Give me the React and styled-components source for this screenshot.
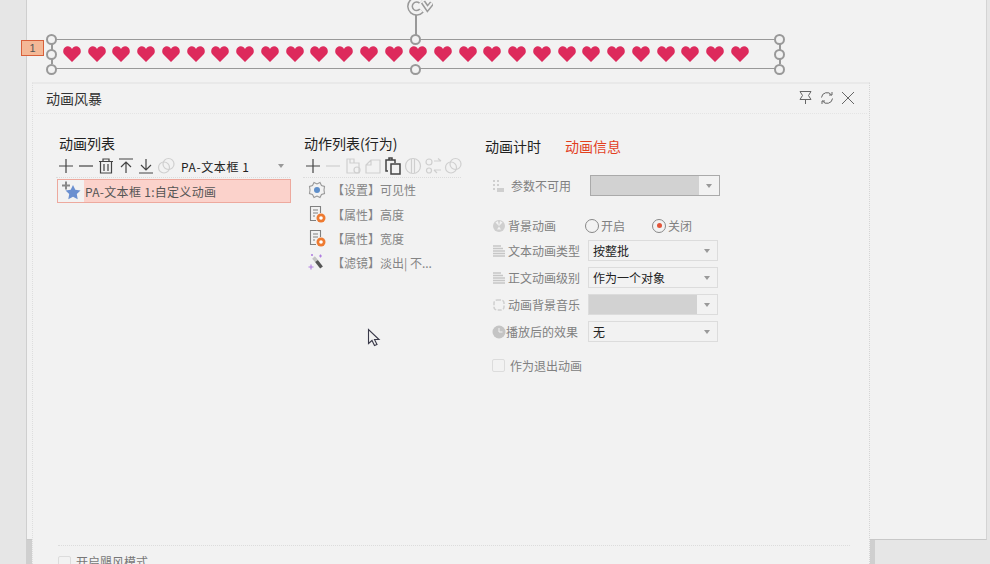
import React from "react";
import styled, { createGlobalStyle } from "styled-components";

const FONT = `"Noto Sans CJK SC", "Liberation Sans", sans-serif`;

const GlobalStyle = createGlobalStyle`
  html, body {
    margin: 0;
    padding: 0;
    width: 990px;
    height: 564px;
    overflow: hidden;
    background: #e6e6e6;
    font-family: ${FONT};
  }
`;

const Stage = styled.div`
  position: relative;
  width: 990px;
  height: 564px;
  overflow: hidden;
  background: #e6e6e6;
`;

const Slide = styled.div`
  position: absolute;
  left: 26px;
  top: 0;
  width: 961px;
  height: 540px;
  background: #f2f2f2;
  border-left: 1px solid #cfcfcf;
  border-right: 1px solid #d4d4d4;
  border-bottom: 1px solid #c8c8c8;
  box-sizing: border-box;
`;

const ShadowStrip = styled.div`
  position: absolute;
  top: 540px;
  left: ${(p) => p.$x}px;
  width: ${(p) => p.$w}px;
  height: 24px;
  background: #cfcfcf;
`;

const SelectBox = styled.div`
  position: absolute;
  left: 51px;
  top: 39px;
  width: 728px;
  height: 30px;
  box-sizing: border-box;
  border-top: 1px solid #999;
  border-bottom: 1px solid #999;
  display: flex;
  align-items: center;
  justify-content: space-between;
  padding: 0 30px 0 12px;
`;

const Heart = styled.svg`
  width: 18px;
  height: 16px;
  flex: none;
  fill: #dd2a5c;
`;

const Handle = styled.span`
  position: absolute;
  width: 11px;
  height: 11px;
  box-sizing: border-box;
  border: 2px solid #999;
  border-radius: 50%;
  background: #f2f2f2;
  left: ${(p) => p.$x}px;
  top: ${(p) => p.$y}px;
`;

const HandleBar = styled.span`
  position: absolute;
  width: 2px;
  background: #999;
  left: ${(p) => p.$x}px;
  top: ${(p) => p.$y}px;
  height: ${(p) => p.$h}px;
`;

const SlideTag = styled.div`
  position: absolute;
  left: 21px;
  top: 40px;
  width: 23px;
  height: 16px;
  box-sizing: border-box;
  background: #f4b896;
  border: 1px solid #d8603a;
  color: #555;
  font: 11px/14px "Liberation Sans", sans-serif;
  text-align: center;
`;

const RotateIcon = styled.svg`
  position: absolute;
  left: 405px;
  top: -5px;
  width: 28px;
  height: 22px;
  fill: none;
`;

const Dialog = styled.section`
  position: absolute;
  left: 32px;
  top: 82px;
  width: 838px;
  height: 520px;
  box-sizing: border-box;
  background: #f2f2f2;
  border-top: 2px solid #e9e9e9;
  border-left: 1px dotted #dedede;
  border-right: 1px dotted #d4d4d4;
  color: #222;
  font-size: 12px;
`;

const TitleBar = styled.header`
  height: 27px;
  margin: 0 2px 0 1px;
  padding: 0 12px 2px;
  border-bottom: 1px dotted #e4e4e4;
  display: flex;
  align-items: center;
  justify-content: space-between;
  font-size: 14px;
  color: #333;
`;

const TitleIcons = styled.div`
  display: flex;
  gap: 7px;
  align-items: center;
  color: #666;
`;

const Body = styled.div`
  display: flex;
  height: 431px;
  padding: 20px 0 0 26px;
  box-sizing: border-box;
`;

const ListColumn = styled.div`
  width: 245px;
  flex: none;
`;

const ActionColumn = styled.div`
  width: 181px;
  flex: none;
`;

const InfoColumn = styled.div`
  flex: 1;
`;

const ColumnTitle = styled.h3`
  margin: 0;
  font-size: 14px;
  font-weight: 400;
  line-height: 18px;
  color: #222;
`;

const Toolbar = styled.div`
  display: flex;
  align-items: center;
  width: ${(p) => p.$w}px;
  height: 22px;
  margin: 3px 0 0 ${(p) => p.$ml}px;
  border-bottom: 1px dotted #dcdcdc;
`;

const ToolIcon = styled.svg`
  width: 20px;
  height: 20px;
  flex: none;
  fill: none;
  stroke: ${(p) => (p.$off ? "#cfcfcf" : "#444")};
  stroke-width: 1.2;
`;

const ToolSelect = styled.div`
  flex: 1;
  margin-left: 5px;
  display: flex;
  align-items: center;
  justify-content: space-between;
  padding-right: 6px;
  font-size: 12px;
  letter-spacing: 0.6px;
  color: #222;
`;

const Caret = styled.span`
  width: 0;
  height: 0;
  border-left: 3px solid transparent;
  border-right: 3px solid transparent;
  border-top: 4px solid ${(p) => p.$c || "#999"};
`;

const AnimRow = styled.div`
  width: 234px;
  height: 24px;
  margin: 1px 0 0 -2px;
  box-sizing: border-box;
  display: flex;
  align-items: center;
  background: #fbd2cb;
  border: 1px solid #eda99e;
  font-size: 12px;
  letter-spacing: 0.3px;
  color: #555;
`;

const StarCell = styled.span`
  width: 26px;
  height: 22px;
  margin-right: 1px;
  flex: none;
  background: #f2f2f2;
  display: flex;
  align-items: center;
  justify-content: center;
`;

const ActionItem = styled.div`
  display: flex;
  align-items: center;
  height: 24px;
  padding-left: 4px;
  font-size: 12px;
  color: #858585;
  &:first-child {
    height: 25px;
  }
  svg {
    width: 18px;
    height: 18px;
    flex: none;
    margin-right: 6px;
  }
`;

const ActionList = styled.div`
  margin-top: -1px;
`;

const Tabs = styled.div`
  display: flex;
  gap: 24px;
  height: 21px;
  align-items: center;
  margin-top: 1px;
  font-size: 14px;
`;

const Tab = styled.span`
  color: ${(p) => (p.$active ? "#e2401f" : "#222")};
`;

const ParamRow = styled.div`
  display: flex;
  align-items: center;
  height: 21px;
  margin-top: ${(p) => p.$gap || 6}px;
  color: #808080;
  font-size: 12px;
`;

const RowIcon = styled.span`
  width: 14px;
  height: 14px;
  flex: none;
  margin: 0 ${(p) => p.$mr}px 0 7px;
  display: flex;
  align-items: center;
  justify-content: center;
  svg {
    width: 14px;
    height: 14px;
  }
`;

const RowLabel = styled.span`
  width: ${(p) => p.$w}px;
  flex: none;
`;

const Dropdown = styled.div`
  width: 130px;
  height: 21px;
  box-sizing: border-box;
  display: flex;
  align-items: center;
  background: #f2f2f2;
  border: 1px solid ${(p) => (p.$strong ? "#aaa" : "#dcdcdc")};
  color: #222;
`;

const DropValue = styled.span`
  flex: 1;
  align-self: stretch;
  display: flex;
  align-items: center;
  padding-left: 4px;
  background: ${(p) => (p.$dim ? "#d2d2d2" : "transparent")};
`;

const DropCaret = styled.span`
  width: 20px;
  flex: none;
  display: flex;
  justify-content: center;
`;

const RadioLabel = styled.label`
  display: flex;
  align-items: center;
  gap: 2px;
  width: 67px;
  color: #808080;
`;

const Radio = styled.span`
  width: 14px;
  height: 14px;
  box-sizing: border-box;
  border: 1px solid #888;
  border-radius: 50%;
  display: flex;
  align-items: center;
  justify-content: center;
  &::after {
    content: "";
    width: 5px;
    height: 5px;
    border-radius: 50%;
    background: ${(p) => (p.$on ? "#e2553a" : "transparent")};
  }
`;

const Check = styled.span`
  width: 13px;
  height: 13px;
  flex: none;
  box-sizing: border-box;
  border: 1px solid #dcdcdc;
  border-radius: 2px;
  margin: ${(p) => p.$m};
`;

const Footer = styled.footer`
  margin: 0 19px 0 25px;
  padding-top: 8px;
  border-top: 1px dotted #dcdcdc;
  display: flex;
  align-items: center;
  color: #777;
  font-size: 12px;
  line-height: 16px;
`;

const Cursor = styled.svg`
  position: absolute;
  left: 367px;
  top: 328px;
  width: 15px;
  height: 20px;
`;

const Plus = ({ off }) => (
  <ToolIcon $off={off} viewBox="0 0 20 20"><path d="M3 10h14M10 3v14" /></ToolIcon>
);
const Minus = ({ off }) => (
  <ToolIcon $off={off} viewBox="0 0 20 20"><path d="M3 10h14" /></ToolIcon>
);
const Trash = () => (
  <ToolIcon viewBox="0 0 20 20">
    <path d="M3 5.500h14M7 5.500V3h6v2.500M4.500 5.500v11.500h11V5.500M8 8v7M12 8v7" />
  </ToolIcon>
);
const ToTop = () => (
  <ToolIcon viewBox="0 0 20 20"><path d="M3 3h14M10 17V6M5 11l5-5 5 5" /></ToolIcon>
);
const ToBottom = () => (
  <ToolIcon viewBox="0 0 20 20"><path d="M3 17h14M10 3v11M5 9l5 5 5-5" /></ToolIcon>
);
const Rings = () => (
  <ToolIcon $off viewBox="0 0 20 20">
    <circle cx="8" cy="11.500" r="5.500" /><circle cx="12.500" cy="8" r="5.500" />
  </ToolIcon>
);
const CopyShape = () => (
  <ToolIcon $off viewBox="0 0 20 20">
    <path d="M4 3h7v4h5v10H4zM7 3v4h4" /><circle cx="14" cy="14" r="3" />
  </ToolIcon>
);
const Duplicate = () => (
  <ToolIcon $off viewBox="0 0 20 20"><path d="M3 9l5-5h9v13H3zM8 4v5H3" /></ToolIcon>
);
const Paste = () => (
  <ToolIcon viewBox="0 0 20 20" style={{ strokeWidth: 1.5 }}>
    <path d="M5 15H3V4h9v3M6 4V2h3v2M8 8h9v10H8z" />
  </ToolIcon>
);
const Split = () => (
  <ToolIcon $off viewBox="0 0 20 20">
    <circle cx="10" cy="10" r="7.500" /><path d="M8.500 3v14M11.500 3v14" />
  </ToolIcon>
);
const Swap = () => (
  <ToolIcon $off viewBox="0 0 20 20">
    <circle cx="6" cy="6" r="3" /><circle cx="6" cy="14.500" r="2.500" />
    <path d="M11 5h7M15 2.500l3 2.500M18 14h-7M14 17l-3-3" />
  </ToolIcon>
);

const Gear = () => (
  <svg viewBox="0 0 18 18">
    <path d="M6 1.500l3 1.500 3-1.500 1.500 3 3 1-.5 3.500.5 3.500-3 1-1.500 3-3-1.500-3 1.500-1.500-3-3-1 .5-3.500-.5-3.500 3-1z" fill="none" stroke="#999" strokeWidth="1.100" />
    <circle cx="9" cy="9" r="3" fill="#5f8fca" />
  </svg>
);
const DocStar = () => (
  <svg viewBox="0 0 18 18">
    <path d="M12.500 8V1.500h-10v14H8M5 5h5M5 8h5M5 11h2" fill="none" stroke="#808080" strokeWidth="1.100" />
    <circle cx="13" cy="13" r="4.500" fill="#ee7a30" />
    <circle cx="13" cy="13" r="1.800" fill="#fff" />
  </svg>
);
const Wand = () => (
  <svg viewBox="0 0 18 18" fill="none">
    <path d="M5.500 4.500L8.500 8" stroke="#c4c4c4" strokeWidth="3.500" />
    <path d="M8.500 8L13.500 14.500" stroke="#555" strokeWidth="3.500" />
    <path d="M3 11.500v5M.5 14h5M12.500 1.500v3M11 3h3M4 1v2M3 2h2" stroke="#b07ee0" strokeWidth="1.100" />
  </svg>
);

const GridMark = () => (
  <svg viewBox="0 0 14 14" fill="#cfcfcf">
    <path d="M1 1h2v2H1zM5 1h2v2H5zM1 5h2v2H1zM5 5h2v2H5zM1 9h2v2H1zM5 9h7v4H5z" />
  </svg>
);
const Nuke = () => (
  <svg viewBox="0 0 14 14">
    <circle cx="7" cy="7" r="6" fill="#cfcfcf" />
    <path d="M7 7L3.500 3.500 6 2zM7 7l3.500-3.500L8 2zM5 10.500l2-3 2 3z" fill="#f2f2f2" />
  </svg>
);
const Lines = () => (
  <svg viewBox="0 0 14 14" stroke="#c6c6c6" strokeWidth="1.400">
    <path d="M1 2h8M1 4.500h10M1 7h12M1 9.500h12M1 12h12" />
  </svg>
);
const DashRing = () => (
  <svg viewBox="0 0 14 14" fill="none" stroke="#cfcfcf" strokeWidth="1.500">
    <rect x="2" y="2" width="10" height="10" rx="3" strokeDasharray="4 1.500" />
  </svg>
);
const Clock = () => (
  <svg viewBox="0 0 14 14">
    <circle cx="7" cy="7" r="6.500" fill="#c4c4c4" />
    <path d="M7 3v4h3.500" fill="none" stroke="#f2f2f2" strokeWidth="1" />
  </svg>
);

const actions = [
  { icon: <Gear />, text: "【设置】可见性" },
  { icon: <DocStar />, text: "【属性】高度" },
  { icon: <DocStar />, text: "【属性】宽度" },
  { icon: <Wand />, text: "【滤镜】淡出| 不..." },
];

const handles = [
  [46, 34], [410, 34], [774, 34],
  [46, 49], [774, 49],
  [46, 64], [410, 64], [774, 64],
];

const ROTATE_ARC = "M16 6.500A6.500 6.500 0 1 0 16.500 15.500";
const ROTATE_TIP = "M18 7l4.500 6.500L27 8";

const App = () => (
  <Stage>
    <GlobalStyle />
    <Slide />
    <ShadowStrip $x={26} $w={6} />
    <ShadowStrip $x={870} $w={5} />
    <SelectBox>
      {Array.from({ length: 28 }).map((_, i) => (
        <Heart key={i} viewBox="0 0 18 16">
          <path d="M9 16L1.500 8.500C-.500 6.500 0 3 1.800 1.500 4 -.500 7.500 0 9 3c1.500-3 5-3.500 7.200-1.500C18 3 18.500 6.500 16.500 8.500z" />
        </Heart>
      ))}
    </SelectBox>
    <HandleBar $x={415} $y={15} $h={21} />
    <HandleBar $x={779} $y={44} $h={20} />
    <HandleBar $x={51} $y={44} $h={20} />
    {handles.map(([x, y]) => (
      <Handle key={`${x}-${y}`} $x={x} $y={y} />
    ))}
    <RotateIcon viewBox="0 0 28 22">
      <path d={ROTATE_ARC} stroke="#999" strokeWidth="6" />
      <path d={ROTATE_ARC} stroke="#f2f2f2" strokeWidth="3" />
      <path d={ROTATE_TIP} stroke="#999" strokeWidth="5" />
      <path d={ROTATE_TIP} stroke="#f2f2f2" strokeWidth="2" />
    </RotateIcon>
    <SlideTag>1</SlideTag>

    <Dialog>
      <TitleBar>
        <span>动画风暴</span>
        <TitleIcons>
          <svg width="15" height="15" viewBox="0 0 15 15" fill="none" stroke="currentColor">
            <path d="M2 1.500h11l-2.500 4 2.500 4H2l2.500-4zM7.500 9.500V14" />
          </svg>
          <svg width="14" height="14" viewBox="0 0 14 14" fill="none" stroke="currentColor">
            <path d="M1.500 6.500A5.500 5.500 0 0 1 11.500 4M12.500 7.500A5.500 5.500 0 0 1 2.500 10M9 4h3V1M5 10H2v3" />
          </svg>
          <svg width="14" height="14" viewBox="0 0 14 14" fill="none" stroke="currentColor">
            <path d="M1 1l12 12M13 1L1 13" />
          </svg>
        </TitleIcons>
      </TitleBar>
      <Body>
        <ListColumn>
          <ColumnTitle>动画列表</ColumnTitle>
          <Toolbar $w={234} $ml={-3}>
            <Plus />
            <Minus />
            <Trash />
            <ToTop />
            <ToBottom />
            <Rings />
            <ToolSelect>
              <span>PA-文本框 1</span>
              <Caret />
            </ToolSelect>
          </Toolbar>
          <AnimRow>
            <StarCell>
              <svg width="22" height="20" viewBox="0 0 22 20">
                <path d="M13 4l2.300 4.700 5.200.8-3.700 3.600.9 5.100-4.700-2.400-4.700 2.400.9-5.100L5.500 9.500l5.200-.8z" fill="#6a8fd0" />
                <path d="M2 4.500h8M6 .5v8" stroke="#888" strokeWidth="2" />
              </svg>
            </StarCell>
            PA-文本框 1:自定义动画
          </AnimRow>
        </ListColumn>

        <ActionColumn>
          <ColumnTitle>动作列表(行为)</ColumnTitle>
          <Toolbar $w={158} $ml={-1}>
            <Plus />
            <Minus off />
            <CopyShape />
            <Duplicate />
            <Paste />
            <Split />
            <Swap />
            <Rings />
          </Toolbar>
          <ActionList>
            {actions.map((a) => (
              <ActionItem key={a.text}>
                {a.icon}
                {a.text}
              </ActionItem>
            ))}
          </ActionList>
        </ActionColumn>

        <InfoColumn>
          <Tabs>
            <Tab>动画计时</Tab>
            <Tab $active>动画信息</Tab>
          </Tabs>
          <ParamRow $gap={19}>
            <RowIcon $mr={5}><GridMark /></RowIcon>
            <RowLabel $w={79}>参数不可用</RowLabel>
            <Dropdown $strong>
              <DropValue $dim />
              <DropCaret><Caret /></DropCaret>
            </Dropdown>
          </ParamRow>
          <ParamRow $gap={19}>
            <RowIcon $mr={2}><Nuke /></RowIcon>
            <RowLabel $w={77}>背景动画</RowLabel>
            <RadioLabel><Radio />开启</RadioLabel>
            <RadioLabel><Radio $on />关闭</RadioLabel>
          </ParamRow>
          <ParamRow $gap={4}>
            <RowIcon $mr={2}><Lines /></RowIcon>
            <RowLabel $w={80}>文本动画类型</RowLabel>
            <Dropdown>
              <DropValue>按整批</DropValue>
              <DropCaret><Caret /></DropCaret>
            </Dropdown>
          </ParamRow>
          <ParamRow>
            <RowIcon $mr={2}><Lines /></RowIcon>
            <RowLabel $w={80}>正文动画级别</RowLabel>
            <Dropdown>
              <DropValue>作为一个对象</DropValue>
              <DropCaret><Caret /></DropCaret>
            </Dropdown>
          </ParamRow>
          <ParamRow>
            <RowIcon $mr={2}><DashRing /></RowIcon>
            <RowLabel $w={80}>动画背景音乐</RowLabel>
            <Dropdown>
              <DropValue $dim />
              <DropCaret><Caret /></DropCaret>
            </Dropdown>
          </ParamRow>
          <ParamRow>
            <RowIcon $mr={0}><Clock /></RowIcon>
            <RowLabel $w={82}>播放后的效果</RowLabel>
            <Dropdown>
              <DropValue>无</DropValue>
              <DropCaret><Caret /></DropCaret>
            </Dropdown>
          </ParamRow>
          <ParamRow $gap={13}>
            <Check $m="0 5px 0 7px" />
            作为退出动画
          </ParamRow>
        </InfoColumn>
      </Body>
      <Footer>
        <Check $m="0 5px 0 0" />
        开启飓风模式
      </Footer>
    </Dialog>

    <Cursor viewBox="0 0 15 20">
      <path d="M1.500 1.500v14l3.500-3 2.500 5 2.500-1-2.500-5h4.500z" fill="#f2f2f2" stroke="#3a3a4a" strokeWidth="1.100" />
    </Cursor>
  </Stage>
);

export default App;
